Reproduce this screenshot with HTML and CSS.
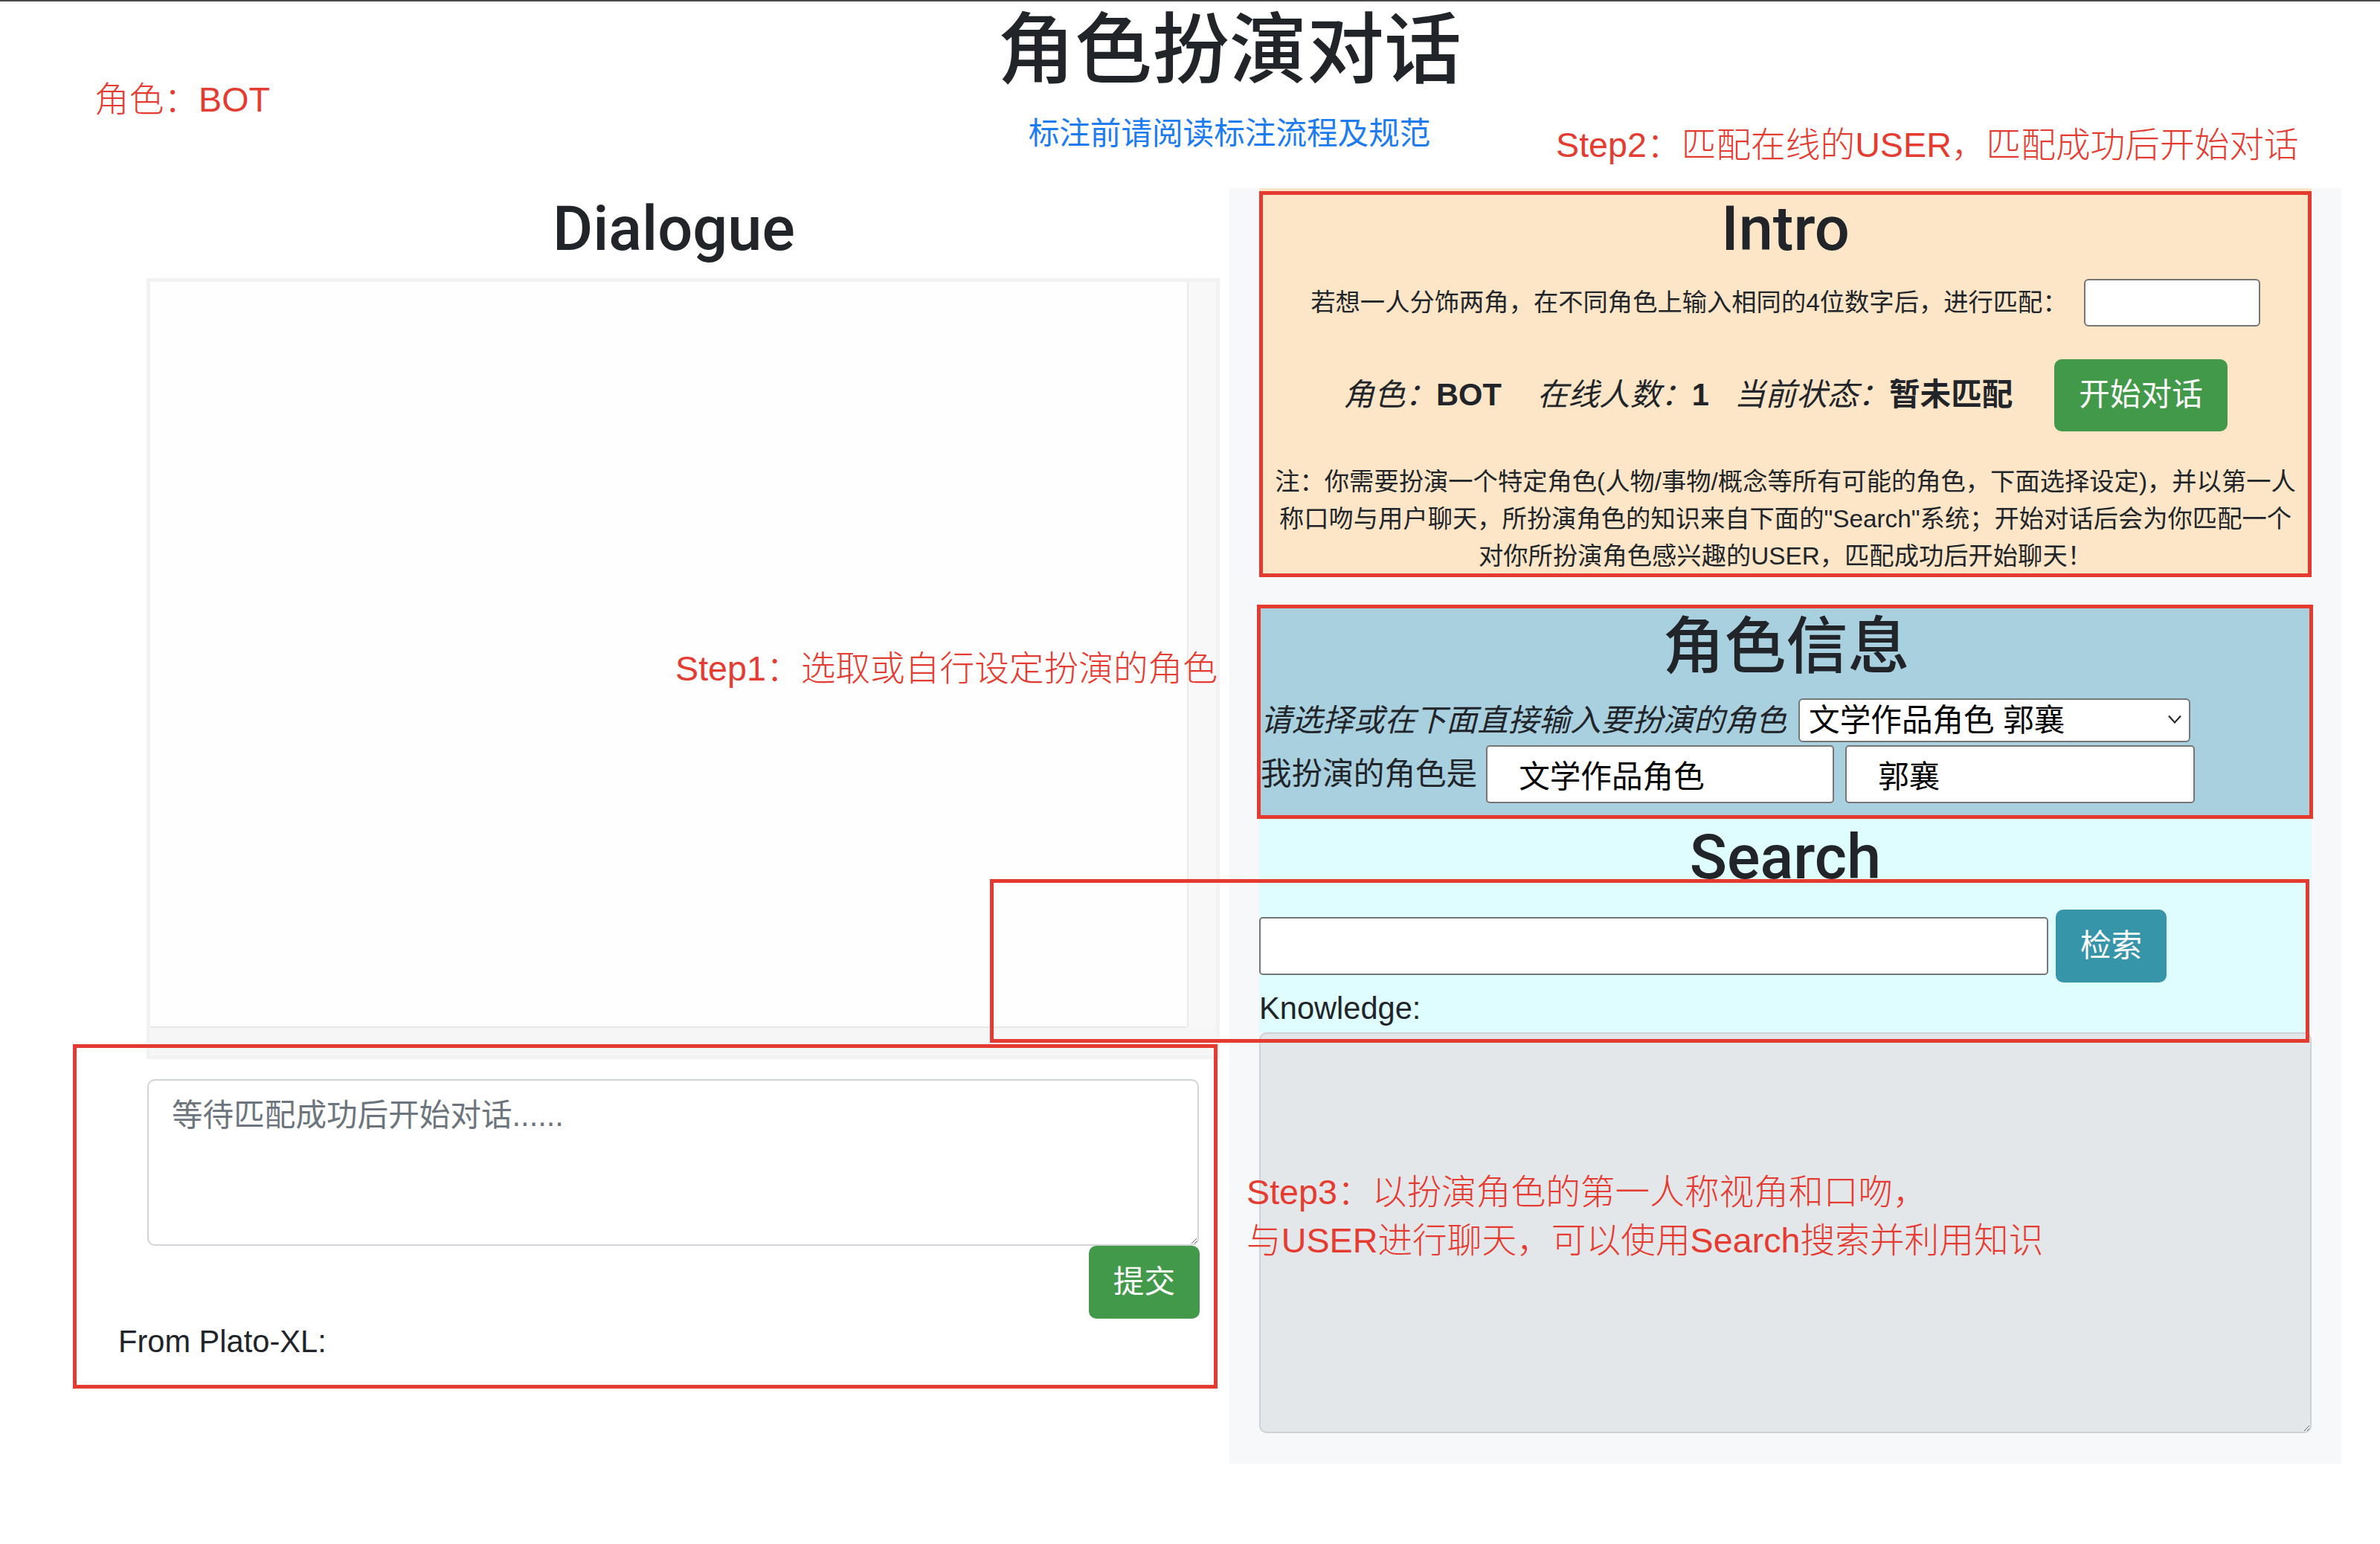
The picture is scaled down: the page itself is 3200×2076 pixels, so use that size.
FILE: index.html
```html
<!DOCTYPE html>
<html lang="zh-CN">
<head>
<meta charset="utf-8">
<title>角色扮演对话</title>
<link rel="stylesheet" href="styles.css">
</head>
<body>
<div class="page">
  <header class="head">
    <h1 class="title">角色扮演对话</h1>
    <p class="guide"><a href="#">标注前请阅读标注流程及规范</a></p>
  </header>

  <main class="main">
    <section class="left">
      <h2 class="h2">Dialogue</h2>
      <div class="chatbox">
        <div class="chatlog"></div>
        <div class="vtrack"></div>
        <div class="htrack"></div>
        <div class="corner"></div>
      </div>
      <div class="composer">
        <textarea class="msg" placeholder="等待匹配成功后开始对话......"></textarea>
        <div class="actions"><button class="btn btn-green">提交</button></div>
      </div>
      <p class="from">From Plato-XL:</p>
    </section>

    <section class="right">
      <div class="intro">
        <h2 class="h2">Intro</h2>
        <p class="pair"><span>若想一人分饰两角，在不同角色上输入相同的4位数字后，进行匹配：</span><input class="code" type="text"></p>
        <p class="status">
          <span class="kv kv1"><i>角色：</i><b>BOT</b></span>
          <span class="kv kv2"><i>在线人数：</i><b>1</b></span>
          <span class="kv kv3"><i>当前状态：</i><b>暂未匹配</b></span>
          <button class="btn btn-green">开始对话</button>
        </p>
        <p class="note">注：你需要扮演一个特定角色(人物/事物/概念等所有可能的角色，下面选择设定)，并以第一人<br>称口吻与用户聊天，所扮演角色的知识来自下面的"Search"系统；开始对话后会为你匹配一个<br>对你所扮演角色感兴趣的USER，匹配成功后开始聊天！</p>
      </div>

      <div class="role">
        <h2 class="h2">角色信息</h2>
        <div class="pick">
          <i class="pick-label">请选择或在下面直接输入要扮演的角色</i>
          <span class="select-wrap">
            <select class="sel"><option>文学作品角色 郭襄</option></select>
            <svg class="chev" width="20" height="14" viewBox="0 0 20 14"><path d="M2 2.5 L10 11.5 L18 2.5" fill="none" stroke="#222" stroke-width="2"/></svg>
          </span>
        </div>
        <div class="mine">
          <span>我扮演的角色是</span>
          <input class="field f1" type="text" value="文学作品角色">
          <input class="field f2" type="text" value="郭襄">
        </div>
      </div>

      <div class="search">
        <h2 class="h2 h2-search">Search</h2>
        <div class="qrow">
          <input class="query" type="text">
          <button class="btn btn-info">检索</button>
        </div>
        <div class="klabel">Knowledge:</div>
      </div>
      <textarea class="knowledge" readonly></textarea>
    </section>
  </main>

  <div class="anno-box r1"></div>
  <div class="anno-box r2"></div>
  <div class="anno-box r3"></div>
  <div class="anno-box r4"></div>

  <span class="anno-text a-role">角色：BOT</span>
  <span class="anno-text a-step2">Step2：匹配在线的USER，匹配成功后开始对话</span>
  <span class="anno-text a-step1">Step1：选取或自行设定扮演的角色</span>
  <span class="anno-text a-step3">Step3：以扮演角色的第一人称视角和口吻，<br>与USER进行聊天，可以使用Search搜索并利用知识</span>
</div>
</body>
</html>
```

FILE: styles.css
```css
* { box-sizing: border-box; }
html, body { margin: 0; padding: 0; background: #fff; }
body {
  font-family: "Liberation Sans", "Noto Sans CJK SC", sans-serif;
  font-size: 41.6px;
  line-height: 1.5;
  color: #212529;
}
.page { position: relative; border-top: 2px solid #4a4a4a; min-height: 2070px; }

.head { text-align: center; padding-left: 106px; }
.title {
  margin: 0 0 18px;
  padding-top: 4px;
  font-family: Roboto, "Noto Sans CJK SC", sans-serif;
  font-weight: 500;
  font-size: 104px;
  line-height: 125px;
}
.guide { margin: 0 0 42px; line-height: 62px; }
.guide a { color: #1d7cf2; text-decoration: none; }

.main { display: flex; align-items: flex-start; }

.h2 {
  margin: 0 0 16px;
  padding-top: 5px;
  font-family: Roboto, "Noto Sans CJK SC", sans-serif;
  font-weight: 500;
  font-size: 83px;
  line-height: 100px;
  text-align: center;
}

/* left column */
.left { width: 1653px; padding-left: 159px; }
.chatbox {
  margin-left: 38px;
  width: 1443px;
  height: 1050px;
  border: 5px solid #f2f2f2;
  display: grid;
  grid-template-columns: 1fr 39px;
  grid-template-rows: 1fr 39px;
}
.chatlog { background: #fefefe; }
.vtrack { background: #f8f8f9; border-left: 2px solid #ebebeb; }
.htrack { background: #f6f6f6; border-top: 2px solid #e8e8e8; }
.corner { background: #f6f6f6; }

.composer { margin: 27px 0 0 39px; width: 1415px; }
.msg {
  display: block;
  width: 1414px;
  height: 224px;
  border: 2.6px solid #ced4da;
  border-radius: 10px;
  padding: 15.6px 31px;
  font-family: "Liberation Sans", "Noto Sans CJK SC", sans-serif;
  font-size: 41.6px;
  line-height: 1.5;
  color: #495057;
  background: #fff;
}
.msg::placeholder { color: #6c757d; }
.actions { display: flex; justify-content: flex-end; }
.from { margin: 0; line-height: 62px; }

.btn {
  font-family: "Liberation Sans", "Noto Sans CJK SC", sans-serif;
  font-size: 41.6px;
  line-height: 62.4px;
  padding: 15.6px 31px;
  border: 2.6px solid transparent;
  border-radius: 10px;
  color: #fff;
  cursor: pointer;
}
.btn-green { background: #42994a; border-color: #42994a; }
.btn-info { background: #3795aa; border-color: #3795aa; }

/* right column */
.right {
  width: 1495px;
  background: #f7f8fa;
  padding: 0 40px 41px 40px;
}
.intro { background: #fde5c8; height: 519px; text-align: center; }
.pair {
  margin: 0 0 42px;
  height: 66px;
  display: flex;
  justify-content: center;
  align-items: center;
  gap: 22px;
  font-size: 33.3px;
}
.code {
  width: 237px;
  height: 64px;
  border: 2.6px solid #767676;
  border-radius: 6px;
  background: #fff;
}
.status {
  margin: 0 0 42px;
  height: 99px;
  display: flex;
  justify-content: center;
  align-items: center;
  white-space: nowrap;
}
.kv i { font-style: italic; }
.kv b { font-weight: 700; }
.kv1 { margin-right: 48px; }
.kv2 { margin-right: 34px; }
.kv3 { margin-right: 56px; }
.note { margin: 0; font-size: 33.3px; line-height: 50px; }

.role { margin-top: 43px; background: #a9d0df; height: 283px; padding-left: 2px; }
.pick { display: flex; align-items: flex-end; gap: 16px; height: 64px; }
.pick-label { line-height: 62px; font-style: italic; }
.select-wrap { position: relative; display: inline-block; }
.sel {
  appearance: none;
  -webkit-appearance: none;
  width: 527px;
  height: 59px;
  border: 2.6px solid #767676;
  border-radius: 6px;
  background: #fff;
  padding: 0 0 0 12px;
  font-family: "Liberation Sans", "Noto Sans CJK SC", sans-serif;
  font-size: 41.6px;
  color: #000;
}
.chev { position: absolute; right: 11px; top: 22px; }
.mine { display: flex; align-items: center; gap: 15px; margin-top: 2px; }
.mine span { margin-right: -3px; }
.field {
  height: 78px;
  border: 2.6px solid #767676;
  border-radius: 5px;
  background: #fff;
  padding: 0 0 0 42px;
  font-family: "Liberation Sans", "Noto Sans CJK SC", sans-serif;
  font-size: 41.6px;
  color: #000;
}
.f1 { width: 468px; }
.f2 { width: 470px; }

.search { background: #dffcfe; height: 290px; }
.h2-search { margin-bottom: 19px; }
.qrow { display: flex; align-items: center; gap: 10px; height: 100px; }
.query {
  width: 1061px;
  height: 78px;
  border: 2.6px solid #767676;
  border-radius: 5px;
  background: #fff;
}
.klabel { line-height: 62px; padding-top: 3px; }
.knowledge {
  display: block;
  width: 100%;
  height: 539px;
  background: #e4e7ea;
  border: 2.6px solid #cdd2d7;
  border-radius: 10px;
}

/* annotations drawn over the page */
.anno-box { position: absolute; border: 5px solid #e43a2f; }
.r1 { left: 1693px; top: 255px; width: 1415px; height: 519px; }
.r2 { left: 1690px; top: 811px; width: 1420px; height: 288px; }
.r3 { left: 1331px; top: 1180px; width: 1774px; height: 220px; }
.r4 { left: 98px; top: 1402px; width: 1539px; height: 463px; }

.anno-text {
  position: absolute;
  color: #e53b30;
  font-family: "Liberation Sans", "Noto Sans CJK SC", sans-serif;
  font-weight: 300;
  font-size: 46.7px;
  line-height: 1;
  white-space: nowrap;
}
.a-role { left: 127px; top: 109px; }
.a-step2 { left: 2092px; top: 170px; }
.a-step1 { left: 908px; top: 874px; }
.a-step3 { left: 1676px; top: 1569px; line-height: 65px; }
```
